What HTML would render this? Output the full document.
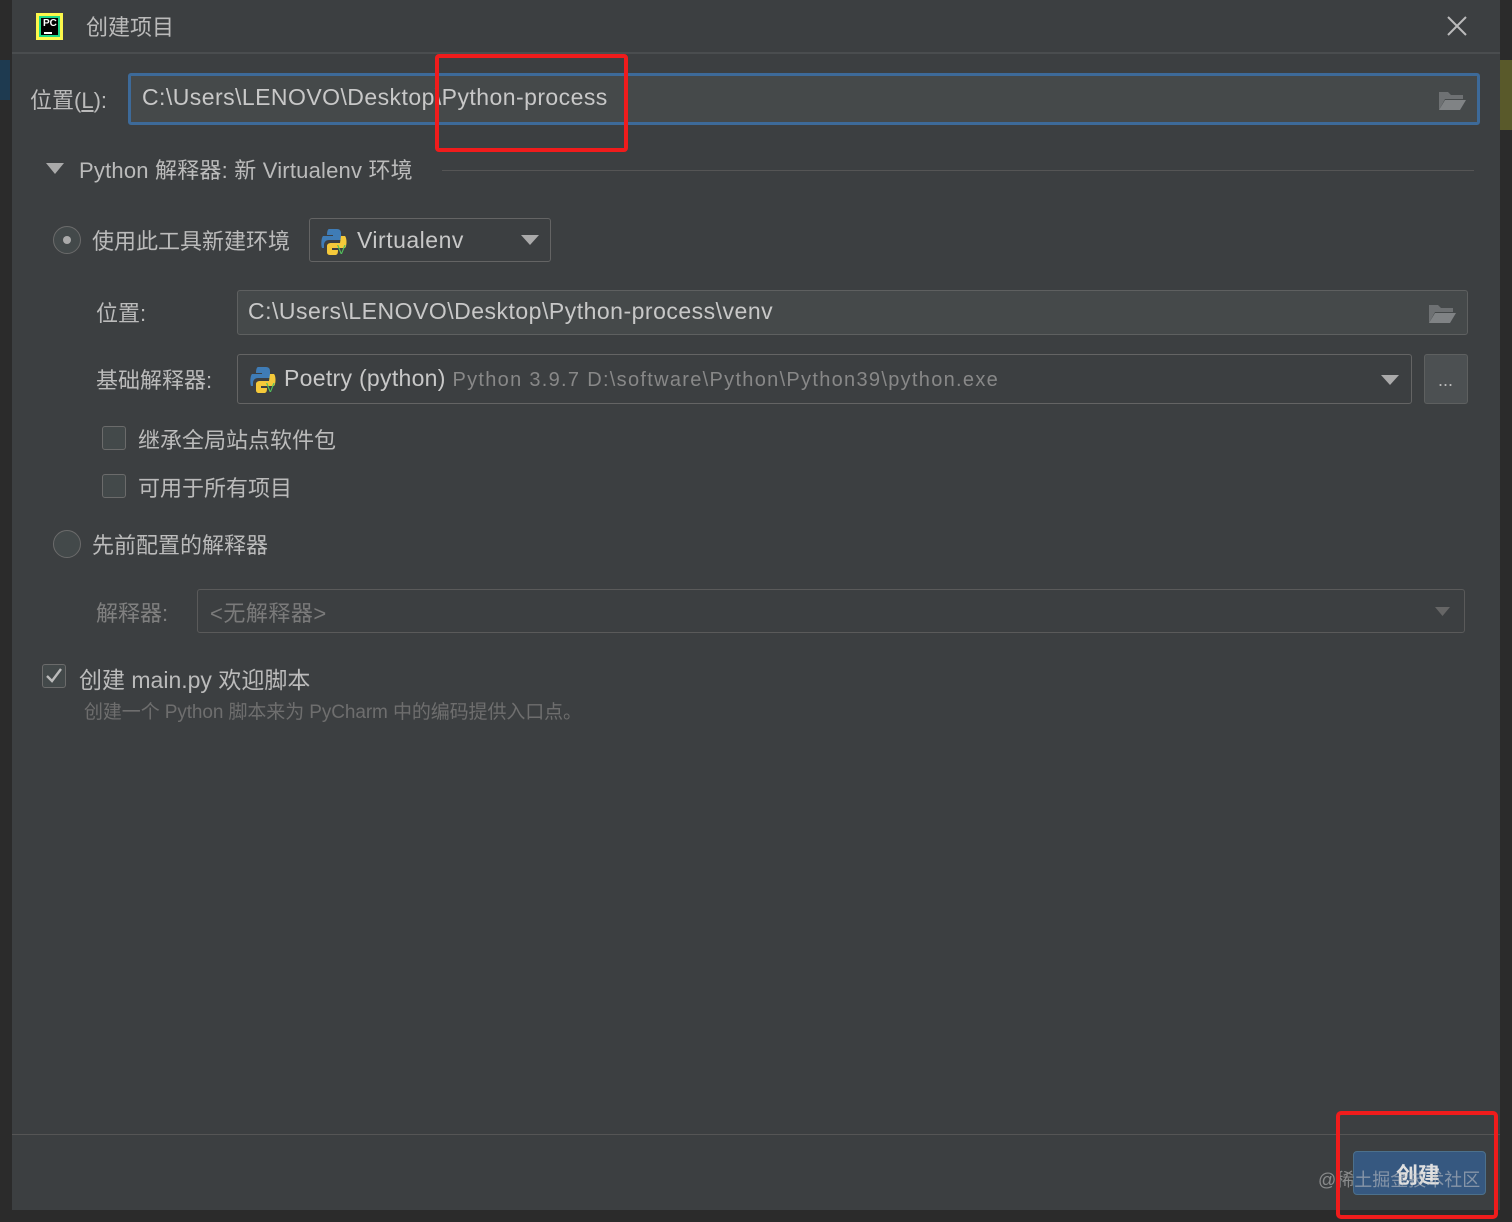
<!DOCTYPE html>
<html><head><meta charset="utf-8"><style>
*{box-sizing:border-box;margin:0;padding:0}
body{width:1512px;height:1222px;background:#2b2b2b;font-family:"Liberation Sans","Noto Sans CJK SC",sans-serif;color:#bbbbbb;position:relative;overflow:hidden}
.dlg{position:absolute;left:12px;top:0;width:1488px;height:1210px;background:#3c3f41}
.a{position:absolute;white-space:nowrap}
.t{font-size:22px}
.field{position:absolute;border:1px solid #5e6060;background:#45494a;border-radius:3px}
.cb{position:absolute;width:24px;height:24px;border:1px solid #6b6b6b;background:#43494a;border-radius:3px}
.rb{position:absolute;width:28px;height:28px;border:1px solid #6b6b6b;background:#43494a;border-radius:50%}
</style></head><body>
<div class="dlg"></div>
<div class="a" style="left:0;top:60px;width:10px;height:40px;background:#1e3a50"></div>
<div class="a" style="left:1500px;top:60px;width:12px;height:70px;background:#59592a"></div>
<!-- title -->
<div class="a" style="left:36px;top:13px;width:27px;height:27px;background:#21d789;border:3px solid #fcf84a"><div style="position:absolute;inset:2px;background:#000"></div><div style="position:absolute;left:4px;top:2px;font-size:10px;color:#fff;font-weight:bold">PC</div><div style="position:absolute;left:5px;top:16px;width:8px;height:2px;background:#fff"></div></div>
<div class="a t" style="left:86px;top:10px;color:#bbb">创建项目</div>
<svg class="a" style="left:1446px;top:15px" width="22" height="22"><path d="M2 2L20 20M20 2L2 20" stroke="#bbb" stroke-width="2"/></svg>
<div class="a" style="left:12px;top:52px;width:1488px;height:2px;background:#4a4d4f"></div>
<!-- location -->
<div class="a t" style="left:30px;top:83px">位置(<u>L</u>):</div>
<div class="field" style="left:128px;top:73px;width:1352px;height:52px;border:3px solid #3d6a99;background:#45494a"></div>
<div class="a" style="left:142px;top:84px;color:#c8c8c8;font-size:23px;letter-spacing:0.45px">C:\Users\LENOVO\Desktop\Python-process</div>
<svg class="a" style="left:1437px;top:88px" width="30" height="24"><path d="M2 4h9l3 3h12v4H8L2 22z" fill="#6e7173"/><path d="M8 12h21l-6 10H2z" fill="#808385"/></svg>
<div class="a" style="left:435px;top:54px;width:193px;height:98px;border:4px solid #f01c1c;border-radius:4px"></div>
<!-- section -->
<svg class="a" style="left:46px;top:163px" width="18" height="12"><path d="M0 0h18L9 11z" fill="#aaa"/></svg>
<div class="a t" style="left:79px;top:153px;letter-spacing:0.2px">Python 解释器: 新 Virtualenv 环境</div>
<div class="a" style="left:442px;top:170px;width:1032px;height:1px;background:#555"></div>
<!-- radio 1 -->
<div class="rb" style="left:53px;top:226px"><div style="position:absolute;left:9px;top:9px;width:8px;height:8px;border-radius:50%;background:#aaa"></div></div>
<div class="a t" style="left:92px;top:224px">使用此工具新建环境</div>
<div class="field" style="left:309px;top:218px;width:242px;height:44px;background:#3c3f41;border-color:#646464"></div>
<svg class="a" style="left:320px;top:227px" width="30" height="28"><path d="M9 2h8c3 0 4 2 4 4v7H9c-3 0-5 2-5 5v3H2c-1-2-1-10 1-12h10V8H7c0-4 1-6 2-6z" fill="#3f7cb6"/><path d="M21 9h4c2 2 2 10 0 12H12v2h6c0 4-1 5-3 5h-5c-2 0-3-1-3-3v-6c0-2 2-3 4-3h9z" fill="#f5c93a"/><text x="17" y="27" font-size="13" fill="#53c35c" font-family="Liberation Sans">V</text></svg>
<div class="a" style="left:357px;top:227px;color:#c8c8c8;font-size:23px;letter-spacing:0.5px">Virtualenv</div>
<svg class="a" style="left:521px;top:235px" width="18" height="11"><path d="M0 0h18L9 10z" fill="#aaa"/></svg>
<!-- venv location -->
<div class="a t" style="left:96px;top:296px">位置:</div>
<div class="field" style="left:237px;top:290px;width:1231px;height:45px"></div>
<div class="a" style="left:248px;top:298px;color:#c8c8c8;font-size:23px;letter-spacing:0.5px">C:\Users\LENOVO\Desktop\Python-process\venv</div>
<svg class="a" style="left:1427px;top:301px" width="30" height="24"><path d="M2 4h9l3 3h12v4H8L2 22z" fill="#6e7173"/><path d="M8 12h21l-6 10H2z" fill="#808385"/></svg>
<!-- base interpreter -->
<div class="a t" style="left:96px;top:363px">基础解释器:</div>
<div class="field" style="left:237px;top:354px;width:1175px;height:50px;background:#3c3f41;border-color:#646464"></div>
<svg class="a" style="left:249px;top:365px" width="30" height="28"><path d="M9 2h8c3 0 4 2 4 4v7H9c-3 0-5 2-5 5v3H2c-1-2-1-10 1-12h10V8H7c0-4 1-6 2-6z" fill="#3f7cb6"/><path d="M21 9h4c2 2 2 10 0 12H12v2h6c0 4-1 5-3 5h-5c-2 0-3-1-3-3v-6c0-2 2-3 4-3h9z" fill="#f5c93a"/><text x="17" y="27" font-size="13" fill="#53c35c" font-family="Liberation Sans">V</text></svg>
<div class="a" style="left:284px;top:365px;color:#c8c8c8;font-size:23px;letter-spacing:0.3px">Poetry (python) <span style="font-size:20px;color:#888;letter-spacing:1.3px">Python 3.9.7 D:\software\Python\Python39\python.exe</span></div>
<svg class="a" style="left:1381px;top:375px" width="18" height="11"><path d="M0 0h18L9 10z" fill="#aaa"/></svg>
<div class="field" style="left:1424px;top:354px;width:44px;height:50px;background:#4c5052;border-color:#5e6060"></div>
<div class="a" style="left:1438px;top:370px;font-size:18px">...</div>
<!-- checkboxes -->
<div class="cb" style="left:102px;top:426px"></div>
<div class="a t" style="left:138px;top:423px">继承全局站点软件包</div>
<div class="cb" style="left:102px;top:474px"></div>
<div class="a t" style="left:138px;top:471px">可用于所有项目</div>
<!-- radio 2 -->
<div class="rb" style="left:53px;top:530px"></div>
<div class="a t" style="left:92px;top:528px">先前配置的解释器</div>
<div class="a" style="left:96px;top:596px;font-size:22px;color:#808080">解释器:</div>
<div class="field" style="left:197px;top:589px;width:1268px;height:44px;background:#3c3f41;border-color:#5a5a5a"></div>
<div class="a" style="left:210px;top:596px;font-size:22px;color:#7a7a7a;letter-spacing:0.5px">&lt;无解释器&gt;</div>
<svg class="a" style="left:1435px;top:607px" width="15" height="9"><path d="M0 0h15L7.5 9z" fill="#666"/></svg>
<!-- main.py -->
<div class="cb" style="left:42px;top:664px"><svg width="22" height="22"><path d="M4 11l5 5 9-12" stroke="#bbb" stroke-width="2.4" fill="none"/></svg></div>
<div class="a t" style="left:79px;top:661px;font-size:23px">创建 main.py 欢迎脚本</div>
<div class="a" style="left:84px;top:697px;font-size:19px;color:#6e6e6e;letter-spacing:-0.1px">创建一个 Python 脚本来为 PyCharm 中的编码提供入口点。</div>
<!-- bottom -->
<div class="a" style="left:12px;top:1134px;width:1488px;height:1px;background:#555"></div>
<div class="a" style="left:1353px;top:1151px;width:133px;height:44px;background:#365880;border:1px solid #4c708c;border-radius:4px"></div>
<div class="a" style="left:1396px;top:1158px;font-size:22px;color:#e0e0e0;font-weight:bold">创建</div>
<div class="a" style="left:1318px;top:1166px;font-size:18px;color:rgba(200,200,200,.55)">@稀土掘金技术社区</div>
<div class="a" style="left:1336px;top:1111px;width:162px;height:108px;border:4px solid #f01c1c;border-radius:5px"></div>
</body></html>
